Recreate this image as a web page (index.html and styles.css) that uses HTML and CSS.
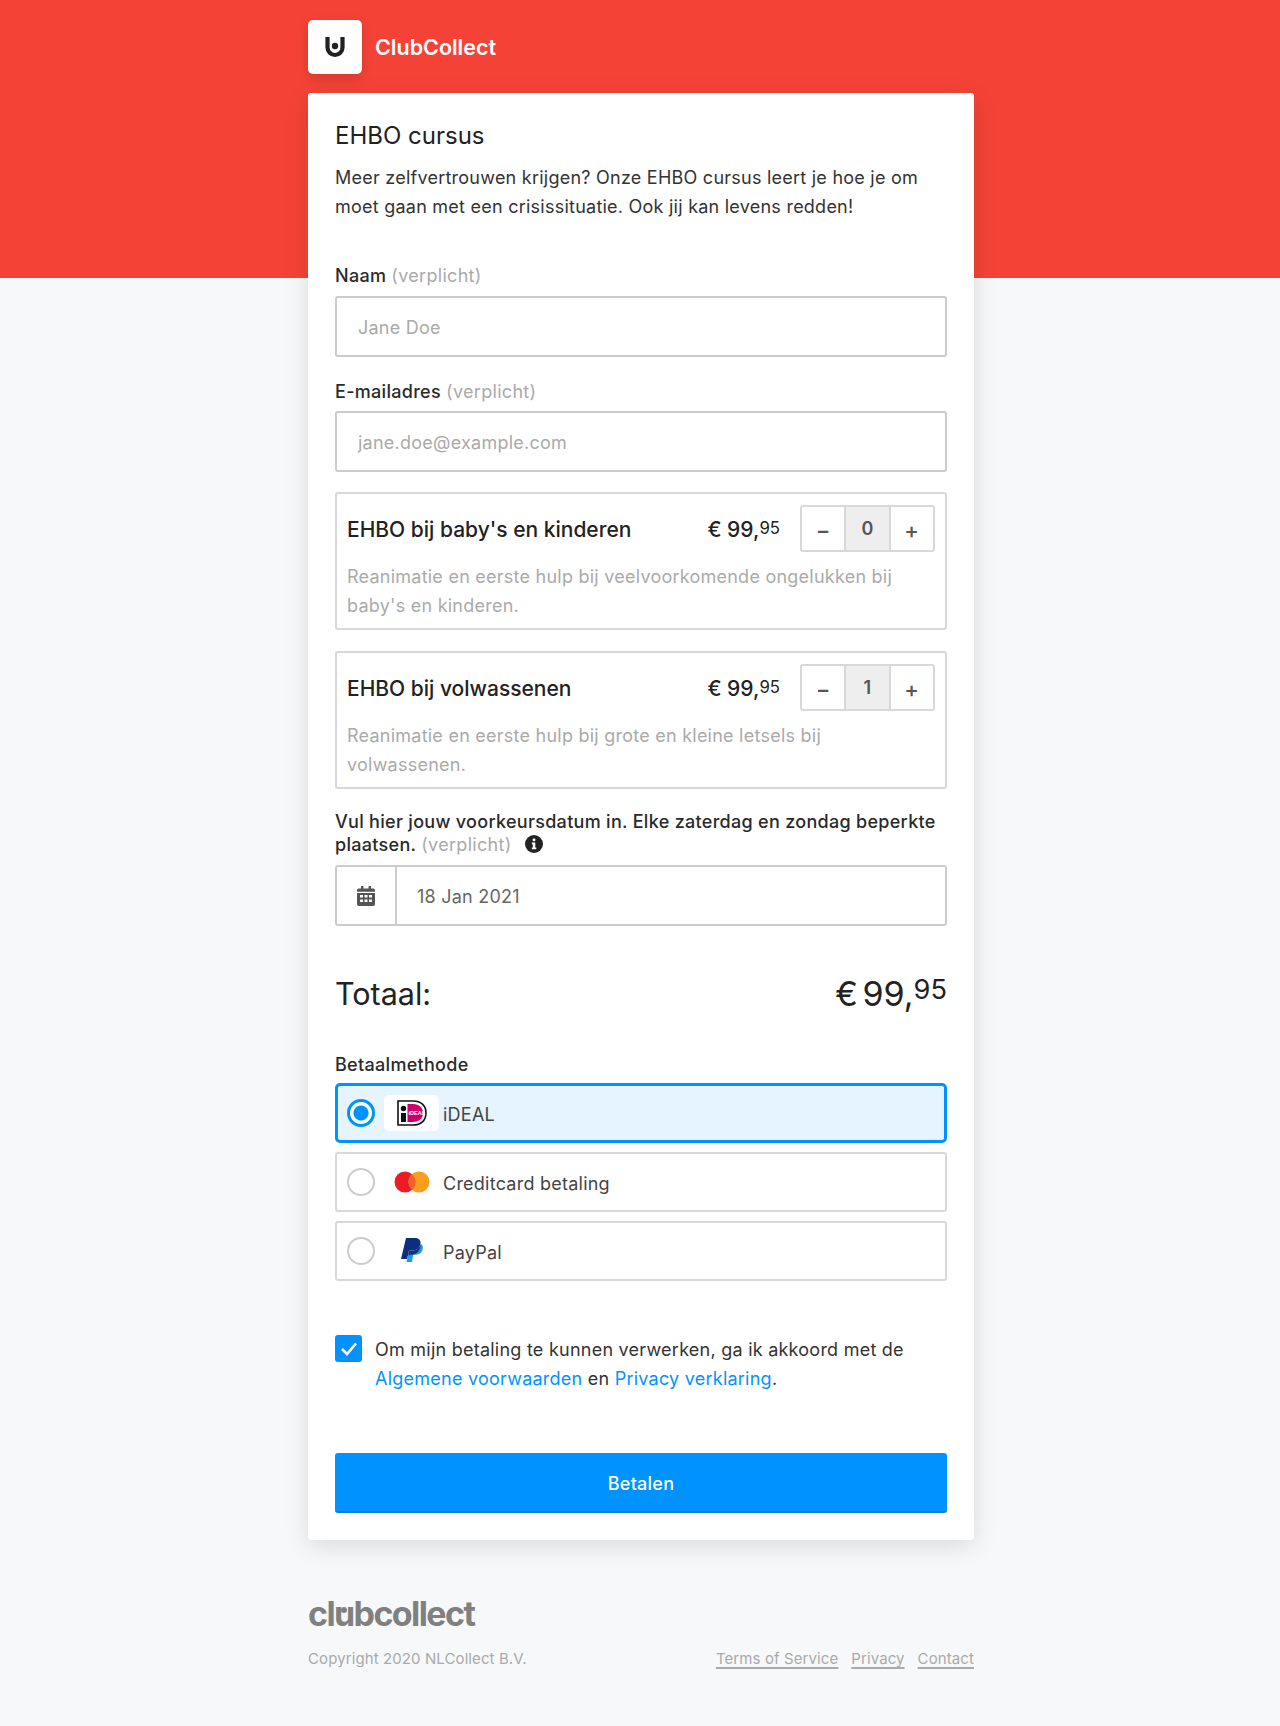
FILE: index.html
```html
<!DOCTYPE html>
<html lang="nl">
<head>
    <meta charset="UTF-8">
    <meta name="viewport" content="width=device-width, initial-scale=1.0">
    <title>EHBO cursus - ClubCollect</title>
    <link rel="stylesheet" href="styles.css">
</head>
<body>
    <div class="page">
        <header class="brand">
            <div class="brand-logo">
                <svg width="22" height="22" viewBox="0 0 22 22">
                    <path d="M3.500 1v10.500a7.500 7.500 0 0 0 15 0V1" fill="none" stroke="#222" stroke-width="4.200"/>
                    <circle cx="11" cy="10" r="3.200" fill="#222"/>
                </svg>
            </div>
            <span class="brand-name">ClubCollect</span>
        </header>

        <main class="card">
            <h1>EHBO cursus</h1>
            <p class="intro">Meer zelfvertrouwen krijgen? Onze EHBO cursus leert je hoe je om moet gaan met een crisissituatie. Ook jij kan levens redden!</p>

            <label class="label label-first">Naam <span class="req">(verplicht)</span></label>
            <div class="input placeholder">Jane Doe</div>

            <label class="label">E-mailadres <span class="req">(verplicht)</span></label>
            <div class="input placeholder">jane.doe@example.com</div>

            <section class="product">
                <div class="product-top">
                    <span class="product-name">EHBO bij baby's en kinderen</span>
                    <span class="price">€ 99,<sup>95</sup></span>
                    <div class="stepper">
                        <span class="step">−</span>
                        <span class="count">0</span>
                        <span class="step">+</span>
                    </div>
                </div>
                <p class="product-desc">Reanimatie en eerste hulp bij veelvoorkomende ongelukken bij baby's en kinderen.</p>
            </section>

            <section class="product">
                <div class="product-top">
                    <span class="product-name">EHBO bij volwassenen</span>
                    <span class="price">€ 99,<sup>95</sup></span>
                    <div class="stepper">
                        <span class="step">−</span>
                        <span class="count">1</span>
                        <span class="step">+</span>
                    </div>
                </div>
                <p class="product-desc">Reanimatie en eerste hulp bij grote en kleine letsels bij volwassenen.</p>
            </section>

            <label class="label label-date">Vul hier jouw voorkeursdatum in. Elke zaterdag en zondag beperkte plaatsen. <span class="req">(verplicht)</span>
                <svg class="info" width="18" height="18" viewBox="0 0 18 18">
                    <circle cx="9" cy="9" r="9" fill="#222"/>
                    <rect x="7.600" y="3.400" width="2.800" height="2.800" rx="1.200" fill="#fff"/>
                    <path d="M6.800 7.600h3.500v5h1v1.600H6.800v-1.600h1v-3.400h-1z" fill="#fff"/>
                </svg>
            </label>
            <div class="input date-input">
                <span class="date-icon">
                    <svg width="18" height="20" viewBox="0 0 18 20">
                        <path d="M4 0h2.400v2.400h5.200V0H14v2.400h2.200A1.800 1.800 0 0 1 18 4.200v1.600H0V4.200a1.800 1.800 0 0 1 1.800-1.800H4z" fill="#555"/>
                        <path fill-rule="evenodd" d="M0 7h18v11.200a1.800 1.800 0 0 1-1.800 1.800H1.800A1.800 1.800 0 0 1 0 18.200zM3 9v2.500h3V9zm4.500 0v2.500h3V9zM12 9v2.500h3V9zM3 13.500V16h3v-2.500zm4.500 0V16h3v-2.500zm4.500 0V16h3v-2.500z" fill="#555"/>
                    </svg>
                </span>
                <span class="date-value">18 Jan 2021</span>
            </div>

            <div class="total">
                <span>Totaal:</span>
                <span class="total-price">€ 99,<sup>95</sup></span>
            </div>

            <label class="label label-pay">Betaalmethode</label>
            <div class="method selected">
                <span class="radio"></span>
                <span class="method-icon">
                    <svg width="30" height="26" viewBox="0 0 30 26">
                        <path d="M1 1h15c8 0 13 4.500 13 12s-5 12-13 12H1z" fill="#fff" stroke="#111" stroke-width="1.600"/>
                        <path d="M10.500 4H16c6 0 10 3.500 10 9s-4 9-10 9h-5.500z" fill="#cd0067"/>
                        <rect x="4" y="13" width="5" height="9" fill="#111"/>
                        <circle cx="6.500" cy="8.500" r="2.700" fill="#111"/>
                        <text x="11.500" y="15" class="ideal-text">iDEAL</text>
                    </svg>
                </span>
                <span class="method-name">iDEAL</span>
            </div>
            <div class="method">
                <span class="radio"></span>
                <span class="method-icon">
                    <svg width="36" height="22" viewBox="0 0 36 22">
                        <circle cx="11" cy="11" r="10.500" fill="#eb1c26"/>
                        <circle cx="25" cy="11" r="10.500" fill="#f99d1c"/>
                        <path d="M18 3.100a10.500 10.500 0 0 1 0 15.800a10.500 10.500 0 0 1 0-15.800z" fill="#f0642a"/>
                    </svg>
                </span>
                <span class="method-name">Creditcard betaling</span>
            </div>
            <div class="method">
                <span class="radio"></span>
                <span class="method-icon">
                    <svg width="22" height="26" viewBox="0 0 22 26">
                        <path d="M5 0h8.500c4 0 6.500 2 6 5.500c-.7 4.500-3.700 7-8.200 7H8L6.200 21H0z" fill="#0b2f7f"/>
                        <path d="M20 6c1.500 1 2.200 2.500 1.800 4.700c-.7 3.800-3.500 6-7.300 6h-2.300L11 24H5.500l.7-3L8 12.500h3.300c4.500 0 7.500-2.500 8.200-6.500z" fill="#1f9bde"/>
                        <path d="M8 12.500h3.300c4.500 0 7.500-2.500 8.200-6.500l-.1 3c-1.200 5-4.700 7.700-9 7.700H7.200z" fill="#1a2f77"/>
                    </svg>
                </span>
                <span class="method-name">PayPal</span>
            </div>

            <div class="terms">
                <span class="checkbox">
                    <svg width="18" height="15" viewBox="0 0 18 15">
                        <path d="M2 8l5 5L16 2.500" fill="none" stroke="#fff" stroke-width="2.600"/>
                    </svg>
                </span>
                <p>Om mijn betaling te kunnen verwerken, ga ik akkoord met de <a href="#">Algemene voorwaarden</a> en <a href="#">Privacy verklaring</a>.</p>
            </div>

            <button class="pay" type="button">Betalen</button>
        </main>

        <footer class="footer">
            <div class="wordmark">cl<span class="wordmark-u">u</span>bcollect</div>
            <div class="footer-row">
                <span>Copyright 2020 NLCollect B.V.</span>
                <nav class="footer-links">
                    <a href="#">Terms of Service</a>
                    <a href="#">Privacy</a>
                    <a href="#">Contact</a>
                </nav>
            </div>
        </footer>
    </div>
</body>
</html>
```

FILE: styles.css
```css
* {
    box-sizing: border-box;
}
body {
    font-family: Inter, "Liberation Sans", sans-serif;
    font-size: 18px;
    letter-spacing: 0.24px;
    color: #333;
    background: #f7f8fa;
    margin: 0;
    height: 1726px;
    overflow: hidden;
    position: relative;
}
/* rode band achter de kaart */
body::before {
    content: "";
    position: absolute;
    top: 0;
    left: 0;
    width: 100%;
    height: 278px;
    background: #f44336;
}
.page {
    position: relative;
    width: 666px;
    margin-left: 308px;
}
.brand {
    display: flex;
    align-items: center;
    gap: 13px;
    height: 93px;
}
.brand-logo {
    width: 54px;
    height: 54px;
    background: white;
    border-radius: 5px;
    box-shadow: 0 4px 12px rgba(0, 0, 0, 0.15);
    display: flex;
    justify-content: center;
    align-items: center;
}
.brand-name {
    color: white;
    font-size: 21.5px;
    font-weight: 600;
    letter-spacing: 0;
}
.card {
    background: white;
    border-radius: 3px;
    padding: 28px 27px 27px;
    height: 1447px;
    box-shadow: 0 6px 24px rgba(0, 0, 0, 0.12);
}
h1 {
    font-size: 24px;
    font-weight: 400;
    letter-spacing: 0;
    line-height: 30px;
    color: #222;
    margin: 0;
}
.intro {
    line-height: 28.5px;
    margin: 13px 0 0;
    color: #333;
}
.label {
    display: block;
    font-weight: 450;
    font-size: 18px;
    letter-spacing: 0.3px;
    color: #2a2a2a;
    line-height: 23px;
    margin: 23px 0 8px;
}
.label-first {
    margin-top: 43px;
    margin-bottom: 9px;
}
.req {
    color: #aaa;
    font-weight: 400;
}
.input {
    height: 61px;
    border: 2px solid #ccc;
    border-radius: 3px;
    padding: 1px 21px 0;
    display: flex;
    align-items: center;
}
.placeholder {
    color: #aaa;
}
.product {
    height: 138px;
    border: 2px solid #d8d8d8;
    border-radius: 3px;
    padding: 11px 10px 0;
    margin-top: 20px;
}
.product + .product {
    margin-top: 21px;
}
.product-top {
    display: flex;
    align-items: center;
    height: 47px;
}
.product-name {
    font-size: 21px;
    font-weight: 500;
    letter-spacing: 0;
    color: #222;
    padding-top: 2px;
    flex: 1;
}
.price {
    font-size: 21px;
    font-weight: 500;
    letter-spacing: 0;
    color: #222;
    padding-top: 2px;
    margin-right: 20px;
}
sup {
    font-size: 0.8em;
    font-weight: 400;
    line-height: 0;
    vertical-align: 0.15em;
}
.stepper {
    display: flex;
    width: 135px;
    height: 47px;
    border: 2px solid #d8d8d8;
    border-radius: 3px;
}
.step,
.count {
    flex: 1;
    display: flex;
    justify-content: center;
    align-items: center;
    color: #555;
    font-size: 22px;
    font-weight: 500;
}
.step {
    padding-top: 3px;
}
.count {
    background: #eee;
    border-left: 2px solid #d8d8d8;
    border-right: 2px solid #d8d8d8;
    font-size: 18px;
    font-weight: 600;
}
.product-desc {
    line-height: 28.5px;
    color: #aaa;
    margin: 11px 0 0;
}
.label-date {
    margin: 21px 0 9px;
}
.info {
    vertical-align: -2px;
    margin-left: 8px;
}
.date-input {
    padding: 0;
}
.date-icon {
    width: 60px;
    height: 100%;
    border-right: 2px solid #ccc;
    display: flex;
    justify-content: center;
    align-items: center;
}
.date-value {
    padding: 1px 0 0 20px;
    color: #666;
}
.total {
    display: flex;
    justify-content: space-between;
    align-items: center;
    font-size: 30.5px;
    font-weight: 400;
    letter-spacing: 0;
    color: #222;
    margin-top: 42px;
    height: 50px;
}
.total-price {
    font-size: 34px;
    word-spacing: -5px;
}
.total-price sup {
    vertical-align: 0.25em;
}
.label-pay {
    margin: 35px 0 7px;
}
.method {
    height: 60px;
    border: 2px solid #d8d8d8;
    border-radius: 3px;
    padding: 0 10px;
    margin-bottom: 9px;
    display: flex;
    align-items: center;
}
.method.selected {
    border: 3px solid #0093ff;
    border-radius: 5px;
    background: #e6f4ff;
    padding: 0 9px;
}
.radio {
    width: 28px;
    height: 28px;
    border: 2px solid #ccc;
    border-radius: 50%;
    background: white;
    flex: none;
}
.selected .radio {
    border: 3px solid #0093ff;
    background: radial-gradient(circle, #0093ff 0 7px, white 8px);
}
.method-icon {
    width: 55px;
    height: 36px;
    margin-left: 9px;
    margin-right: 4px;
    border-radius: 5px;
    display: flex;
    justify-content: center;
    align-items: center;
    flex: none;
}
.selected .method-icon {
    background: white;
}
.ideal-text {
    font-family: "Liberation Sans", sans-serif;
    font-size: 5.5px;
    font-weight: 700;
    letter-spacing: 0;
    fill: white;
}
.method-name {
    color: #444;
    padding-top: 2px;
}
.terms {
    display: flex;
    gap: 13px;
    margin-top: 54px;
}
.checkbox {
    width: 27px;
    height: 27px;
    background: #0093ff;
    border-radius: 3px;
    flex: none;
    display: flex;
    justify-content: center;
    align-items: center;
}
.terms p {
    margin: 0;
    padding-top: 1px;
    line-height: 28.5px;
}
.terms a {
    color: #0093ff;
    text-decoration: none;
}
.pay {
    display: block;
    width: 100%;
    height: 60px;
    margin-top: 60px;
    padding-top: 3px;
    background: #0093ff;
    border: none;
    border-bottom: 2px solid #0a7fd6;
    border-radius: 3px;
    color: white;
    font-family: inherit;
    font-size: 18px;
    font-weight: 500;
    letter-spacing: inherit;
}
.footer {
    color: #aaa;
    font-size: 15px;
    letter-spacing: 0.1px;
    margin-top: 55px;
}
.wordmark {
    font-size: 34px;
    font-weight: 700;
    letter-spacing: -1.6px;
    line-height: 38px;
    color: #808080;
}
.wordmark-u {
    position: relative;
}
.wordmark-u::after {
    content: "";
    position: absolute;
    left: 7px;
    top: 14px;
    width: 6px;
    height: 6px;
    border-radius: 50%;
    background: #808080;
}
.footer-row {
    display: flex;
    justify-content: space-between;
    margin-top: 16px;
}
.footer-links {
    display: flex;
    gap: 13px;
}
.footer-links a {
    color: #aaa;
    text-decoration: underline;
    text-decoration-thickness: 1.5px;
    text-underline-offset: 3px;
}
```
